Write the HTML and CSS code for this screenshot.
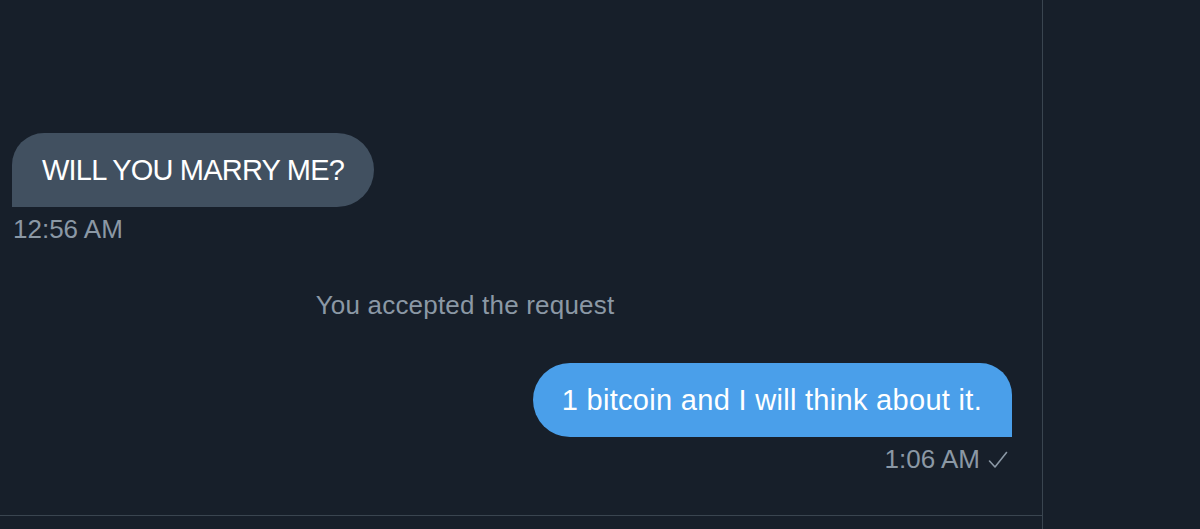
FILE: index.html
```html
<!DOCTYPE html>
<html lang="en">
<head>
<meta charset="utf-8">
<title>Messages</title>
<link rel="stylesheet" href="styles.css">
</head>
<body>
<div class="app">
  <main class="chat">
    <section class="messages">
      <div class="msg msg-in">
        <div class="bubble">WILL YOU MARRY ME?</div>
        <div class="meta">12:56 AM</div>
      </div>
      <div class="notice">You accepted the request</div>
      <div class="msg msg-out">
        <div class="bubble">1 bitcoin and I will think about it.</div>
        <div class="meta">1:06 AM<svg class="check" width="20" height="18" viewBox="0 0 20 18"><polyline points="1.5,10 7,16 18.5,1.5" fill="none" stroke="#8b98a5" stroke-width="1.6" stroke-linecap="round" stroke-linejoin="round"/></svg></div>
      </div>
    </section>
    <div class="composer"></div>
  </main>
  <aside class="side"></aside>
</div>
</body>
</html>
```

FILE: styles.css
```css
* { box-sizing: border-box; }
html, body {
  margin: 0;
  padding: 0;
  background: #171f2a;
}
body {
  font-family: "Liberation Sans", Arial, sans-serif;
  color: #ffffff;
}
.app {
  display: flex;
  height: 529px;
  overflow: hidden;
}
.chat {
  width: 1043px;
  flex: none;
  border-right: 1px solid #3a4550;
  display: flex;
  flex-direction: column;
}
.side {
  flex: 1;
}
.messages {
  height: 516px;
  border-bottom: 1px solid #3a4550;
  padding: 133px 30px 0 12px;
  display: flex;
  flex-direction: column;
}
.composer {
  flex: 1;
}
.msg {
  display: flex;
  flex-direction: column;
}
.msg-in { align-items: flex-start; }
.msg-out { align-items: flex-end; margin-top: 43px; }
.bubble {
  font-size: 29px;
  line-height: 34px;
  padding: 20px 30px;
  white-space: nowrap;
}
.msg-in .bubble {
  background: #415060;
  border-radius: 32px 37px 37px 0;
  letter-spacing: -0.8px;
}
.msg-out .bubble {
  background: #4a9fea;
  border-radius: 37px 32px 0 37px;
  letter-spacing: 0.3px;
  padding-left: 29px;
}
.meta {
  margin-top: 7px;
  font-size: 26px;
  line-height: 30px;
  color: #8b98a5;
  display: flex;
  align-items: center;
}
.msg-in .meta { padding-left: 1px; }
.msg-out .meta { padding-right: 4px; }
.check {
  margin-left: 8px;
  margin-top: 2px;
}
.notice {
  margin-top: 46px;
  font-size: 26px;
  line-height: 30px;
  letter-spacing: 0.2px;
  color: #8b98a5;
  text-align: center;
  padding-right: 94px;
}
```
